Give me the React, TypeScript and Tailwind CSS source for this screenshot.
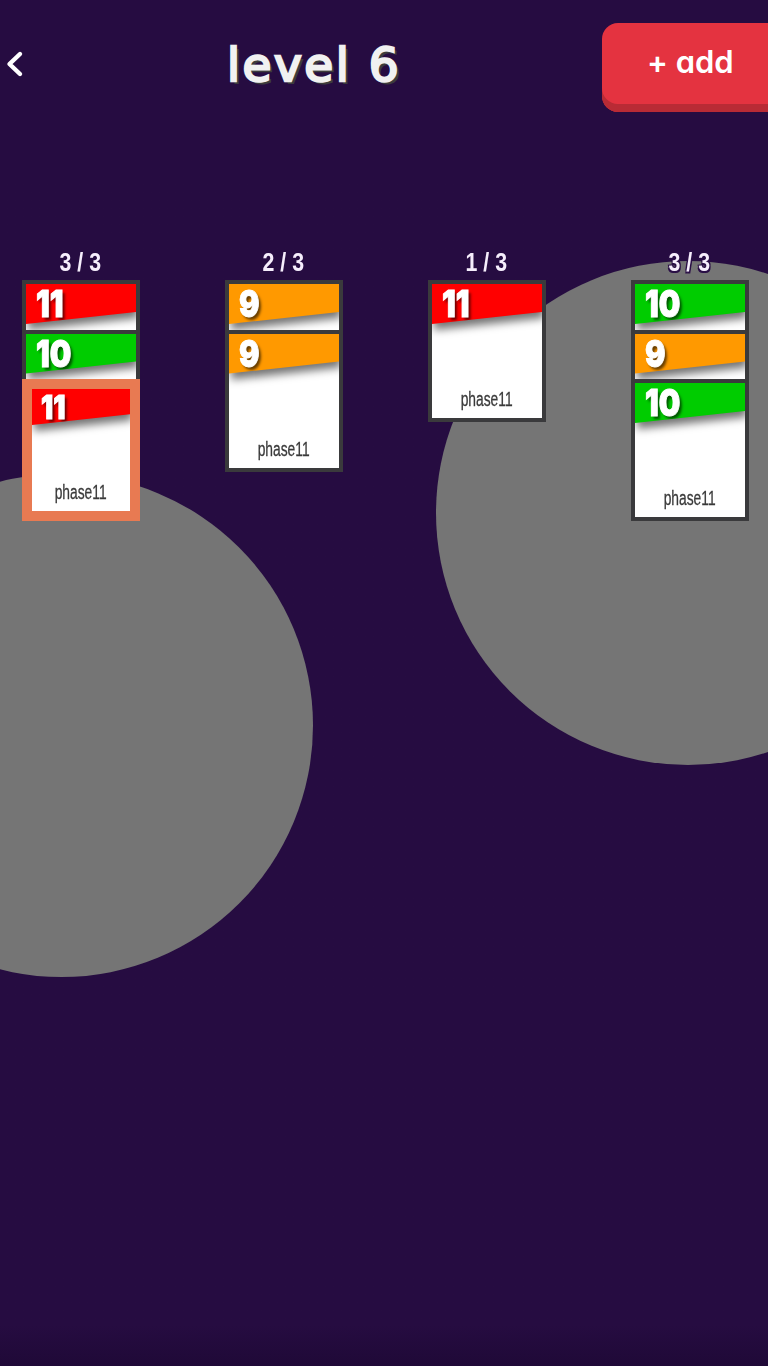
const narrow = { fontFamily: '"Liberation Sans", sans-serif' };

type C = { color: string; num: string; selected?: boolean };

function Card({ color, num, last, selected }: C & { last: boolean }) {
  return (
    <div className={`w-[118px] shrink-0 overflow-hidden ${last ? "h-[142px]" : "h-[49.5px]"}`}>
      <div
        className={`box-border flex h-[142px] flex-col justify-between overflow-hidden bg-white ${
          selected ? "border-[10px] border-[#e87a52] pb-[7px]" : "border-[4px] border-[#3a3a3c] pb-[7px]"
        }`}
      >
        <div className="drop-shadow-[2px_6px_4px_rgba(0,0,0,0.55)]">
          <div
            className={`[clip-path:polygon(0_0,100%_0,100%_70%,0_100%)] font-black text-white [-webkit-text-stroke:1px_#ffffff] [font-family:'Inter',sans-serif] [text-shadow:3px_3px_3px_rgba(0,0,0,0.6)] ${color} ${
              selected ? "h-[36px] pl-[9px] text-[33px] leading-[36px]" : "h-[40px] pl-[10px] text-[37px] leading-[40px]"
            }`}
          >
            <span className="inline-block origin-left scale-x-[0.82]">{num}</span>
          </div>
        </div>
        {last && (
          <div className="text-center text-[20px] leading-[24px] text-[#3a3a3a] [-webkit-text-stroke:0.3px_#3a3a3a]" style={narrow}>
            <span className="inline-block scale-x-[0.69]">phase11</span>
          </div>
        )}
      </div>
    </div>
  );
}

const red = "bg-[#ff0000]";
const green = "bg-[#00cc00]";
const orange = "bg-[#ff9900]";

const columns: { label: string; cards: C[]; outlined?: boolean }[] = [
  { label: "3 / 3", cards: [{ color: red, num: "11" }, { color: green, num: "10" }, { color: red, num: "11", selected: true }] },
  { label: "2 / 3", cards: [{ color: orange, num: "9" }, { color: orange, num: "9" }] },
  { label: "1 / 3", cards: [{ color: red, num: "11" }] },
  { label: "3 / 3", outlined: true, cards: [{ color: green, num: "10" }, { color: orange, num: "9" }, { color: green, num: "10" }] },
];

export default function App() {
  return (
    <div className="relative h-[1366px] w-[768px] overflow-hidden bg-linear-to-b from-[#260c41] from-[97%] to-[#1f0937]">
      <div className="absolute left-[-190px] top-[474px] h-[503px] w-[503px] rounded-full bg-[#757575]" />
      <div className="absolute left-[436px] top-[261px] h-[504px] w-[504px] rounded-full bg-[#757575]" />

      <div className="relative">
        <header className="flex h-[128px] items-start pl-[4px] pt-[23px]">
          <svg className="mt-[26px] shrink-0" width="22" height="30" viewBox="0 0 22 30" fill="none">
            <path d="M16 5 L5.5 15 L16 25" stroke="#ffffff" strokeWidth="4.4" strokeLinecap="round" strokeLinejoin="round" />
          </svg>
          <h1 className="ml-[201px] mt-[13px] w-[375px] shrink-0 text-[47px] leading-[58px] font-normal tracking-[2.5px] text-[#f1f1f1] [-webkit-text-stroke:2.4px_#f1f1f1] [font-family:'DejaVu_Sans',sans-serif] [text-shadow:3px_3px_0_#3c3c3c]">
            level 6
          </h1>
          <div className="h-[89px] w-[200px] shrink-0 rounded-[16px] bg-[#e43340] pl-[45px] pt-[20px] shadow-[inset_0_-8px_0_#b92b35]">
            <span className="text-[31px] leading-[38px] font-semibold text-white [font-family:'Inter',sans-serif] [font-feature-settings:'cv11']">
              + add
            </span>
          </div>
        </header>

        <main className="flex justify-between pl-[22px] pr-[19px] pt-[120px]">
          {columns.map((col, i) => (
            <section key={i} className="flex w-[118px] flex-col items-center">
              <div
                className={`mb-[2px] mr-[2px] h-[30px] text-[26px] leading-[29px] font-bold text-[#f6eefc] ${
                  col.outlined ? "[text-shadow:-1.5px_-1.5px_0_#2a0f46,1.5px_-1.5px_0_#2a0f46,-1.5px_1.5px_0_#2a0f46,1.5px_1.5px_0_#2a0f46]" : ""
                }`}
                style={narrow}
              >
                <span className="inline-block scale-x-[0.82]">{col.label}</span>
              </div>
              {col.cards.map((c, j) => (
                <Card key={j} {...c} last={j === col.cards.length - 1} />
              ))}
            </section>
          ))}
        </main>
      </div>
    </div>
  );
}
